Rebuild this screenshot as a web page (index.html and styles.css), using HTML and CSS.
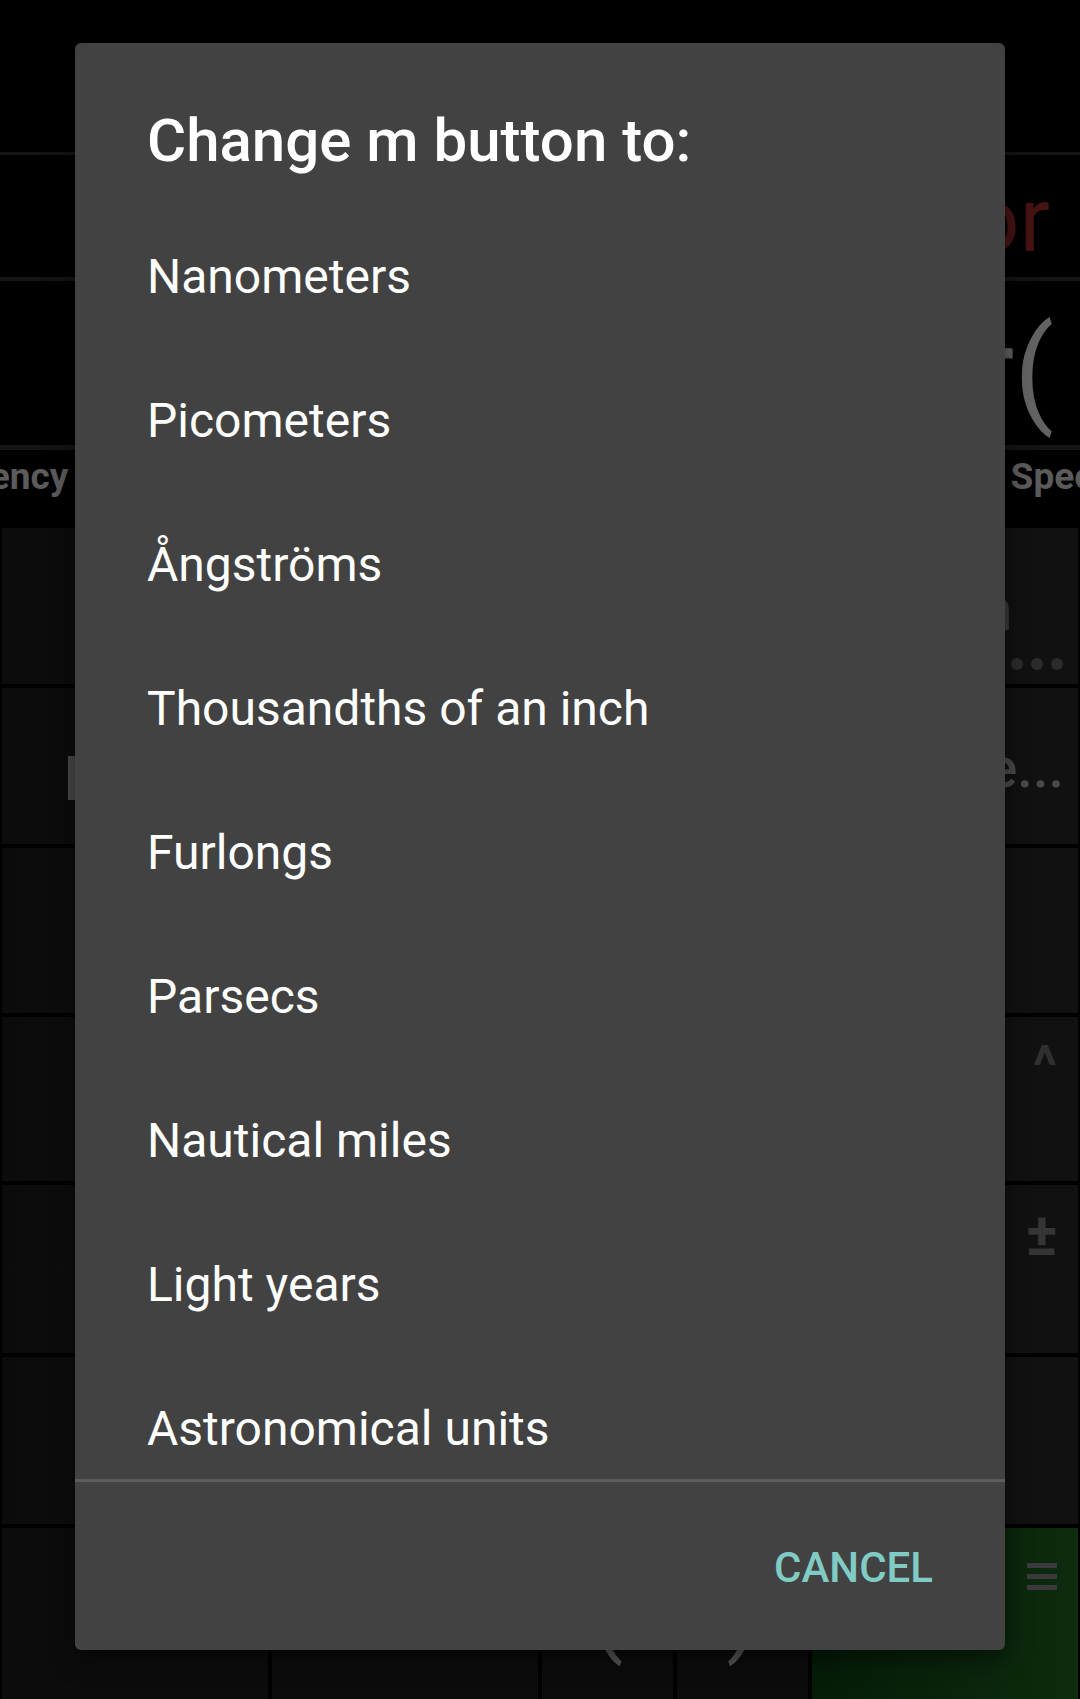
FILE: index.html
```html
<!DOCTYPE html>
<html lang="en">
<head>
<meta charset="utf-8">
<title>Change m button</title>
<link rel="stylesheet" href="styles.css">
</head>
<body>
<div class="app">
  <div class="statusbar"></div>
  <div class="titlebar"><span class="apptitle">Calculator</span></div>
  <div class="display"><span class="expr">nCr(</span></div>
  <div class="tabs">
    <span class="tab tab-first">Currency</span>
    <span class="tab">Length</span>
    <span class="tab tab-last">Speed</span>
  </div>
  <div class="keypad">
    <div class="key"></div>
    <div class="key"></div>
    <div class="key"></div>
    <div class="key key-fn key-r1">
      <span class="lbl-main">Mean</span>
      <span class="more-dots" aria-label="more"><i></i><i></i><i></i></span>
    </div>

    <div class="key key-r2l"><span class="lbl-mass">Mass</span></div>
    <div class="key"></div>
    <div class="key"></div>
    <div class="key key-fn key-r2"><span class="lbl-trunc">Degree...</span></div>

    <div class="key key-dk"></div>
    <div class="key key-dk"></div>
    <div class="key key-dk"></div>
    <div class="key key-fn"></div>

    <div class="key key-dk"></div>
    <div class="key key-dk"></div>
    <div class="key key-dk"></div>
    <div class="key key-fn key-corner"><span class="lbl-corner lbl-caret">^</span></div>

    <div class="key key-dk"></div>
    <div class="key key-dk"></div>
    <div class="key key-dk"></div>
    <div class="key key-fn key-corner"><span class="lbl-corner lbl-pm">±</span></div>

    <div class="key key-dk"></div>
    <div class="key key-dk"></div>
    <div class="key key-dk"></div>
    <div class="key key-fn"></div>

    <div class="key"></div>
    <div class="key"></div>
    <div class="key-split">
      <div class="key key-paren"><span class="paren">(</span></div>
      <div class="key key-paren"><span class="paren">)</span></div>
    </div>
    <div class="key key-eq key-corner">
      <span class="menu-bars"><i></i><i></i><i></i></span>
    </div>
  </div>
</div>

<div class="dialog" role="dialog" aria-labelledby="dlg-title">
  <h1 class="dlg-title" id="dlg-title">Change m button to:</h1>
  <ul class="dlg-list">
    <li class="dlg-item">Nanometers</li>
    <li class="dlg-item">Picometers</li>
    <li class="dlg-item">Ångströms</li>
    <li class="dlg-item">Thousandths of an inch</li>
    <li class="dlg-item">Furlongs</li>
    <li class="dlg-item">Parsecs</li>
    <li class="dlg-item">Nautical miles</li>
    <li class="dlg-item">Light years</li>
    <li class="dlg-item">Astronomical units</li>
  </ul>
  <div class="dlg-sep"></div>
  <div class="dlg-actions"><button class="dlg-btn">CANCEL</button></div>
</div>
</body>
</html>
```
FILE: styles.css
```css
html, body {
  margin: 0;
  padding: 0;
  background: #000;
}
body {
  width: 1080px;
  height: 1699px;
  overflow: hidden;
  position: relative;
  font-family: Roboto, "Noto Sans", "Liberation Sans", sans-serif;
}
*, *::before, *::after {
  box-sizing: border-box;
}

.app {
  display: flex;
  flex-direction: column;
  height: 1699px;
}

.statusbar {
  height: 155px;
  border-bottom: 3px solid #141414;
}

.titlebar {
  height: 126px;
  border-bottom: 4px solid #141414;
  display: flex;
  justify-content: flex-end;
  align-items: center;
  padding-right: 30px;
  overflow: hidden;
}
.apptitle {
  font-size: 90px;
  color: #461313;
  line-height: 1;
  padding-top: 10px;
}

.display {
  height: 169px;
  border-bottom: 5px solid #141414;
  display: flex;
  justify-content: flex-end;
  align-items: center;
  padding-right: 26px;
  overflow: hidden;
}
.expr {
  font-size: 116px;
  color: #626262;
  line-height: 1;
  padding-top: 16px;
}

.tabs {
  height: 75px;
  display: flex;
  align-items: center;
  justify-content: space-between;
  overflow: hidden;
  margin-left: -82px;
  margin-right: -35px;
  padding-bottom: 22px;
}
.tab {
  font-weight: 700;
  font-size: 37px;
  color: #5b5b5b;
  white-space: nowrap;
}

.keypad {
  margin-top: 3px;
  flex: 1;
  display: grid;
  grid-template-columns: repeat(4, 1fr);
  grid-template-rows: 156px 156px 165px 164px 168px 167px 171px;
  gap: 4px;
  padding: 0 2px;
}
.key {
  background: #0c0c0c;
  display: flex;
  align-items: center;
  justify-content: center;
  overflow: hidden;
}
.key-dk {
  background: linear-gradient(90deg, #0b0b0b, #111);
}
.key-fn {
  background: #111;
}

.key-r1 {
  flex-direction: column;
  align-items: flex-end;
  justify-content: flex-start;
}
.lbl-main {
  font-size: 60px;
  color: #3b3b3b;
  line-height: 1;
  margin-top: 52px;
  margin-right: 65px;
}
.more-dots {
  display: flex;
  gap: 8px;
  margin-top: 18px;
  margin-right: 15px;
}
.more-dots i {
  display: block;
  width: 12px;
  height: 12px;
  border-radius: 50%;
  background: #2b2b2b;
}

.key-r2 {
  justify-content: flex-end;
  padding-right: 14px;
}
.lbl-trunc {
  font-size: 56px;
  font-weight: 500;
  color: #4a4a4a;
  line-height: 1;
  padding-top: 4px;
  white-space: nowrap;
}

.key-r2l {
  justify-content: flex-start;
  padding-left: 62px;
}
.lbl-mass {
  font-size: 62px;
  font-weight: 700;
  color: #4a4a4a;
  padding-top: 24px;
}

.key-corner {
  align-items: flex-start;
  justify-content: flex-end;
}
.lbl-corner {
  font-weight: 700;
  line-height: 1;
}
.lbl-caret {
  font-size: 56px;
  color: #2f2f2f;
  margin-top: 21px;
  margin-right: 21px;
}
.lbl-pm {
  font-size: 60px;
  color: #353535;
  margin-top: 20px;
  margin-right: 20px;
}

.key-split {
  display: flex;
  gap: 4px;
}
.key-split .key {
  flex: 1;
}
.paren {
  font-size: 92px;
  color: #555;
  line-height: 1;
}

.key-eq {
  background: linear-gradient(90deg, #051c07, #0d2b0e);
}
.menu-bars {
  display: flex;
  flex-direction: column;
  gap: 6px;
  margin-top: 35px;
  margin-right: 21px;
}
.menu-bars i {
  display: block;
  width: 30px;
  height: 5px;
  background: #3a3a3a;
}

/* Dialog overlay */
.dialog {
  position: absolute;
  left: 75px;
  top: 43px;
  width: 930px;
  height: 1607px;
  background: #424242;
  border-radius: 6px;
  display: flex;
  flex-direction: column;
  overflow: hidden;
  box-shadow: 0 8px 24px rgba(0, 0, 0, 0.5);
}
.dlg-title {
  margin: 0;
  padding: 63px 72px 28px;
  height: 161px;
  font-size: 60px;
  font-weight: 500;
  line-height: 70px;
  color: #fff;
}
.dlg-list {
  list-style: none;
  margin: 0;
  padding: 0;
  height: 1275px;
  flex: none;
  overflow: hidden;
}
.dlg-item {
  height: 144px;
  display: flex;
  align-items: center;
  padding-left: 72px;
  font-size: 48px;
  color: #fff;
  white-space: nowrap;
}
.dlg-sep {
  height: 3px;
  flex: none;
  background: #5c5c5c;
}
.dlg-actions {
  flex: 1;
  display: flex;
  align-items: center;
  justify-content: flex-end;
  padding: 4px 72px 0 0;
}
.dlg-btn {
  background: none;
  border: 0;
  padding: 0;
  font-family: Roboto, "Noto Sans", sans-serif;
  font-size: 42px;
  font-weight: 500;
  color: #80cbc4;
  line-height: 1;
}
```
